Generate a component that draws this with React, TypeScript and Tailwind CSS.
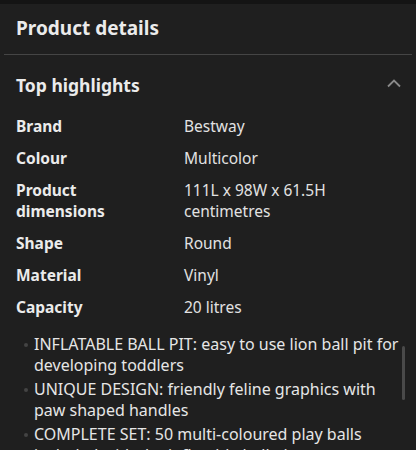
const rows: [string, string[]][] = [
  ["Brand", ["Bestway"]],
  ["Colour", ["Multicolor"]],
  ["Product dimensions", ["111L x 98W x 61.5H centimetres"]],
  ["Shape", ["Round"]],
  ["Material", ["Vinyl"]],
  ["Capacity", ["20 litres"]],
];

const bullets = [
  "INFLATABLE BALL PIT: easy to use lion ball pit for developing toddlers",
  "UNIQUE DESIGN: friendly feline graphics with paw shaped handles",
  "COMPLETE SET: 50 multi-coloured play balls included with the inflatable ball pit",
];

export default function App() {
  return (
    <div className="w-[416px] h-[450px] overflow-hidden bg-[#1f1f1f] text-[#ebebeb] font-['Noto_Sans',sans-serif] relative">
      <div className="h-[4px] bg-[#141414]" />
      <div className="px-4 pt-[10px] h-[50px]">
        <h1 className="text-[19px] leading-[28px] font-bold">Product details</h1>
      </div>
      <div className="mx-1 h-px bg-[#454545]" />
      <div className="flex items-center justify-between pl-4 pr-[14px] pt-[17px]">
        <h2 className="text-[17.5px] leading-[26px] font-bold">Top highlights</h2>
        <svg width="16" height="10" viewBox="0 0 16 10" fill="none" className="text-[#8a8a8a] -mt-1">
          <path d="M2 8.5 L8 2.5 L14 8.5" stroke="currentColor" strokeWidth="1.8" />
        </svg>
      </div>
      <div className="px-4 pt-[18px] flex flex-col gap-[11px]">
        {rows.map(([k, v]) => (
          <div key={k} className="grid grid-cols-[168px_1fr] text-[15.5px] leading-[21px]">
            <div className="font-bold pr-4">{k}</div>
            <div className="text-[#e2e2e2]">{v}</div>
          </div>
        ))}
      </div>
      <ul className="pl-[34px] pr-4 pt-[16px] flex flex-col gap-[3px] text-[16px] leading-[21px] text-[#e6e6e6]">
        {bullets.map((b) => (
          <li key={b} className="relative">
            <span className="absolute -left-[10px] top-[9px] w-[4px] h-[4px] rounded-full bg-[#444]" />
            {b}
          </li>
        ))}
      </ul>
      <div className="absolute left-[402px] top-[346px] w-[3px] h-[54px] rounded-full bg-[#4a4a4a]" />
    </div>
  );
}
